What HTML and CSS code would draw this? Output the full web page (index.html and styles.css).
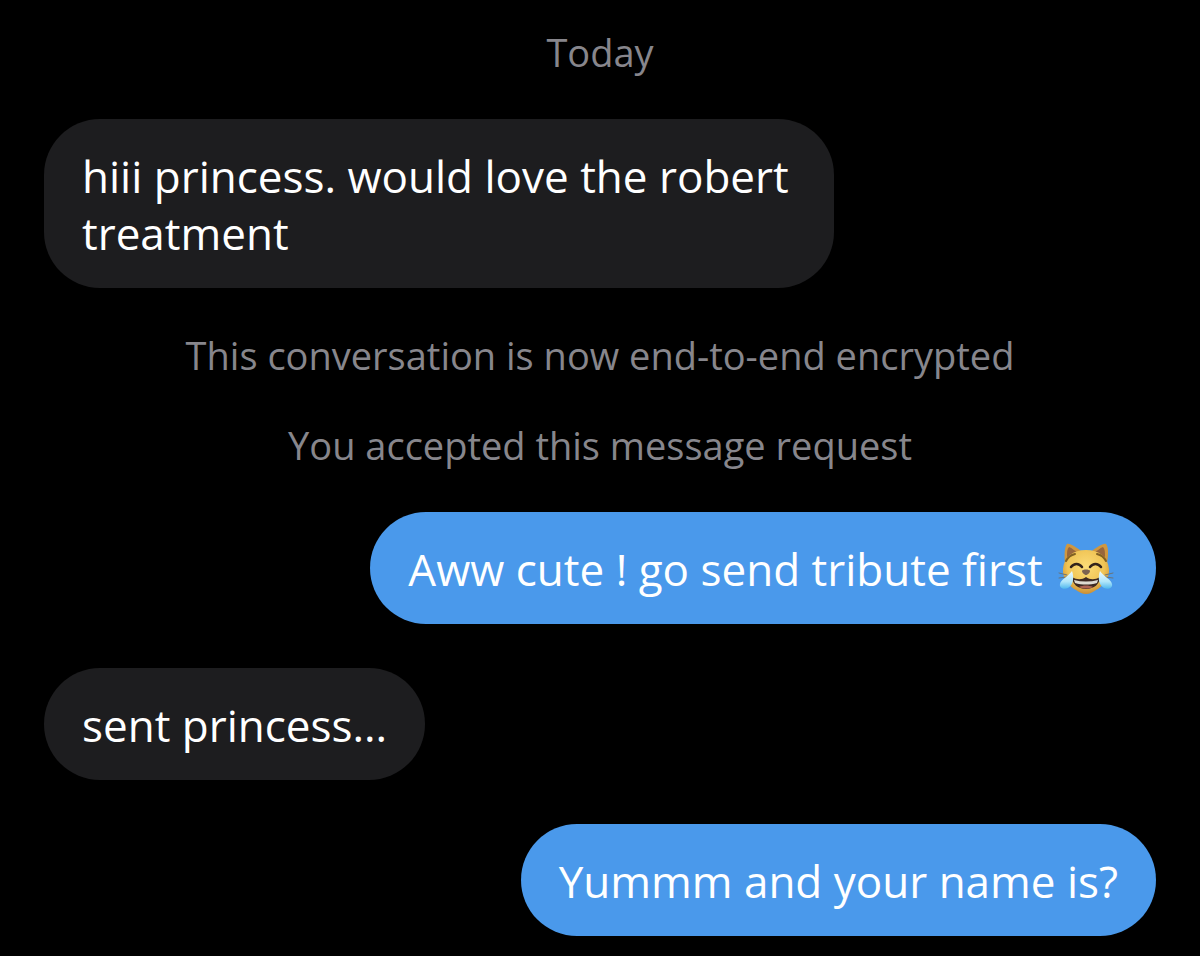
FILE: index.html
```html
<!DOCTYPE html>
<html lang="en">
<head>
<meta charset="utf-8">
<meta name="viewport" content="width=device-width, initial-scale=1">
<title>Conversation</title>
<link rel="stylesheet" href="styles.css">
</head>
<body>
<main class="chat">
  <p class="note">Today</p>
  <p class="bubble received">hiii princess. would love the robert treatment</p>
  <p class="note">This conversation is now end-to-end encrypted</p>
  <p class="note">You accepted this message request</p>
  <p class="bubble sent">Aww cute ! go send tribute first <svg class="emoji" viewBox="0 0 56 56" role="img" aria-label="Cat with tears of joy">
    <defs>
      <radialGradient id="fur" cx="50%" cy="38%" r="62%">
        <stop offset="0" stop-color="#fbdc78"/>
        <stop offset="0.65" stop-color="#f0c455"/>
        <stop offset="1" stop-color="#c98d35"/>
      </radialGradient>
      <linearGradient id="tear" x1="0" y1="0" x2="0" y2="1">
        <stop offset="0" stop-color="#f0fbff"/>
        <stop offset="0.6" stop-color="#b0e6fa"/>
        <stop offset="1" stop-color="#4fb8ee"/>
      </linearGradient>
    </defs>
    <path d="M7 22C6 12 7 5 9 3c3-1 10 4 14 7h11c4-3 11-8 14-7 2 2 3 9 1 19z" fill="#cf9740"/>
    <path d="M9 16C9 11 9 8 11 6c3 1 6 4 9 6zM47 16c0-5 0-8-2-10-3 1-6 4-9 6z" fill="#98663d"/>
    <path d="M28 9c13 0 22 7 23 19 1 10-7 18-13 21-3 2-6 4-10 4s-7-2-10-4C12 46 4 38 5 28 6 16 15 9 28 9z" fill="url(#fur)"/>
    <g fill="none" stroke-linecap="round">
      <path d="M8 20c2-4 5-6 9-7M48 20c-2-4-5-6-9-7" stroke="#816023" stroke-width="2"/>
      <path d="M13 26c3-4 8-4 11 0M32 26c3-4 8-4 11 0" stroke="#33231b" stroke-width="2.5"/>
      <path d="M1 32l8 2M1 37l8-1M55 32l-8 2M55 37l-8-1" stroke="#69747a" stroke-width="1"/>
    </g>
    <path d="M14 36c5 3 10 3 14 0 4 3 9 3 14 0 0 7-6 12-14 12s-14-5-14-12z" fill="#3d2922"/>
    <path d="M16 39c8 2 16 2 24 0l-1 3c-7 2-15 2-22 0z" fill="#dedbd2"/>
    <path d="M21 46c4-2 10-2 14 0-4 2-10 2-14 0z" fill="#ad6354"/>
    <path d="M24 30c0-2 8-2 8 0 0 2-3 4-4 4s-4-2-4-4z" fill="#7c6250"/>
    <path d="M14 30c2 5 2 14-4 17-4 2-9 0-8-4 1-5 8-7 12-13zM42 30c-2 5-2 14 4 17 4 2 9 0 8-4-1-5-8-7-12-13z" fill="url(#tear)"/>
  </svg></p>
  <p class="bubble received">sent princess...</p>
  <p class="bubble sent">Yummm and your name is?</p>
</main>
</body>
</html>
```
FILE: styles.css
```css
body {
  margin: 0;
  background: #000;
  color: #fff;
  font-family: "Open Sans", "Noto Sans", sans-serif;
}

.chat {
  display: flex;
  flex-direction: column;
  gap: 44px;
  padding: 29px 44px 22px;
}

.note {
  margin: 0;
  color: #87868c;
  font-size: 38px;
  line-height: 46px;
  text-align: center;
}

.bubble {
  box-sizing: border-box;
  max-width: 71%;
  margin: 0;
  padding: 29px 38px 26px;
  border-radius: 56px;
  font-size: 44px;
  line-height: 57px;
}

.received {
  align-self: flex-start;
  background: #1d1d1f;
}

.sent {
  align-self: flex-end;
  background: #4a99eb;
}

.emoji {
  width: 56px;
  height: 56px;
  margin: 0 4px;
  vertical-align: -11px;
}
```
